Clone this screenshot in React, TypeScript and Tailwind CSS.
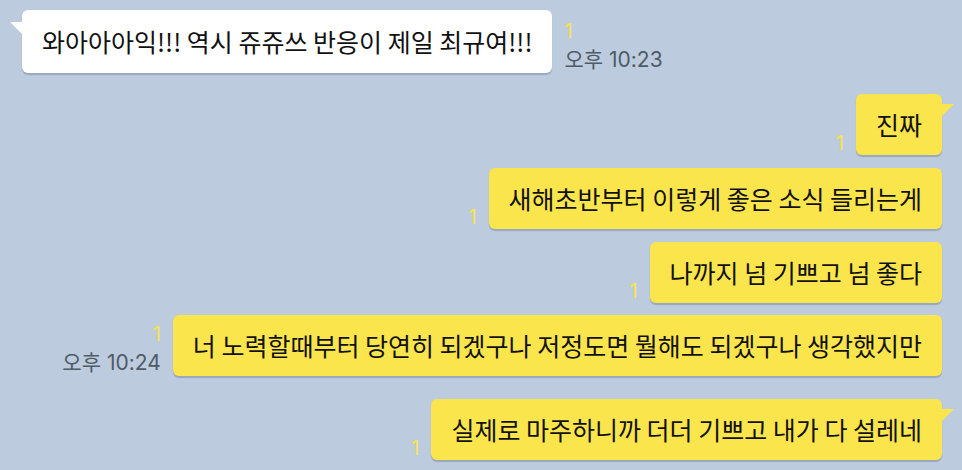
import React from "react";

type Msg = {
    text: string;
    mine: boolean;
    tail?: boolean;
    time?: string;
    gap: string;
};

const messages: Msg[] = [
    { text: "와아아아익!!! 역시 쥬쥬쓰 반응이 제일 최규여!!!", mine: false, tail: true, time: "오후 10:23", gap: "mt-[10px]" },
    { text: "진짜", mine: true, tail: true, gap: "mt-[21px]" },
    { text: "새해초반부터 이렇게 좋은 소식 들리는게", mine: true, gap: "mt-[13px]" },
    { text: "나까지 넘 기쁘고 넘 좋다", mine: true, gap: "mt-[13px]" },
    { text: "너 노력할때부터 당연히 되겠구나 저정도면 뭘해도 되겠구나 생각했지만", mine: true, time: "오후 10:24", gap: "mt-[12px]" },
    { text: "실제로 마주하니까 더더 기쁘고 내가 다 설레네", mine: true, tail: true, gap: "mt-[23px]" },
];

const Meta = ({ time, mine }: { time?: string; mine: boolean }) => (
    <div
        className={`flex flex-col ${mine ? "items-end" : "items-start"} pb-[1px]`}
        style={{ fontFamily: 'Inter, "Noto Sans CJK KR", sans-serif' }}
    >
        <span className="text-[20px] leading-[22px] text-[#f7e34c]">1</span>
        {time && (
            <span className="mt-[5px] text-[21px] leading-[25px] text-[#4f5b67]">{time}</span>
        )}
    </div>
);

const Bubble = ({ msg }: { msg: Msg }) => (
    <div
        className={`relative flex items-center rounded-[6px] px-[20px] text-[25px] text-[#111] shadow-[0_1.5px_1px_rgba(60,80,110,0.28)] ${
            msg.mine ? "h-[61px] bg-[#fbe54d]" : "h-[63px] bg-white"
        }`}
    >
        {msg.tail && msg.mine && (
            <div className="absolute right-[-12px] top-[10px] h-[13px] w-[13px] bg-[#fbe54d] [clip-path:polygon(0_0,100%_0,0_100%)]" />
        )}
        {msg.tail && !msg.mine && (
            <div className="absolute left-[-12px] top-[12px] h-[13px] w-[13px] bg-white [clip-path:polygon(0_0,100%_0,100%_100%)]" />
        )}
        <span className="whitespace-nowrap">{msg.text}</span>
    </div>
);

const App = () => {
    return (
        <div
            className="h-[470px] w-[962px] overflow-hidden bg-[#bccbdd] px-[20px]"
            style={{ fontFamily: '"Noto Sans CJK KR", "Noto Sans", sans-serif' }}
        >
            <div className="flex flex-col">
                {messages.map((m, i) => (
                    <div
                        key={i}
                        className={`flex items-end gap-[12px] ${m.gap} ${m.mine ? "justify-end" : "justify-start pl-[2px]"}`}
                    >
                        {m.mine ? (
                            <>
                                <Meta time={m.time} mine />
                                <Bubble msg={m} />
                            </>
                        ) : (
                            <>
                                <Bubble msg={m} />
                                <Meta time={m.time} mine={false} />
                            </>
                        )}
                    </div>
                ))}
            </div>
        </div>
    );
};

export default App;
